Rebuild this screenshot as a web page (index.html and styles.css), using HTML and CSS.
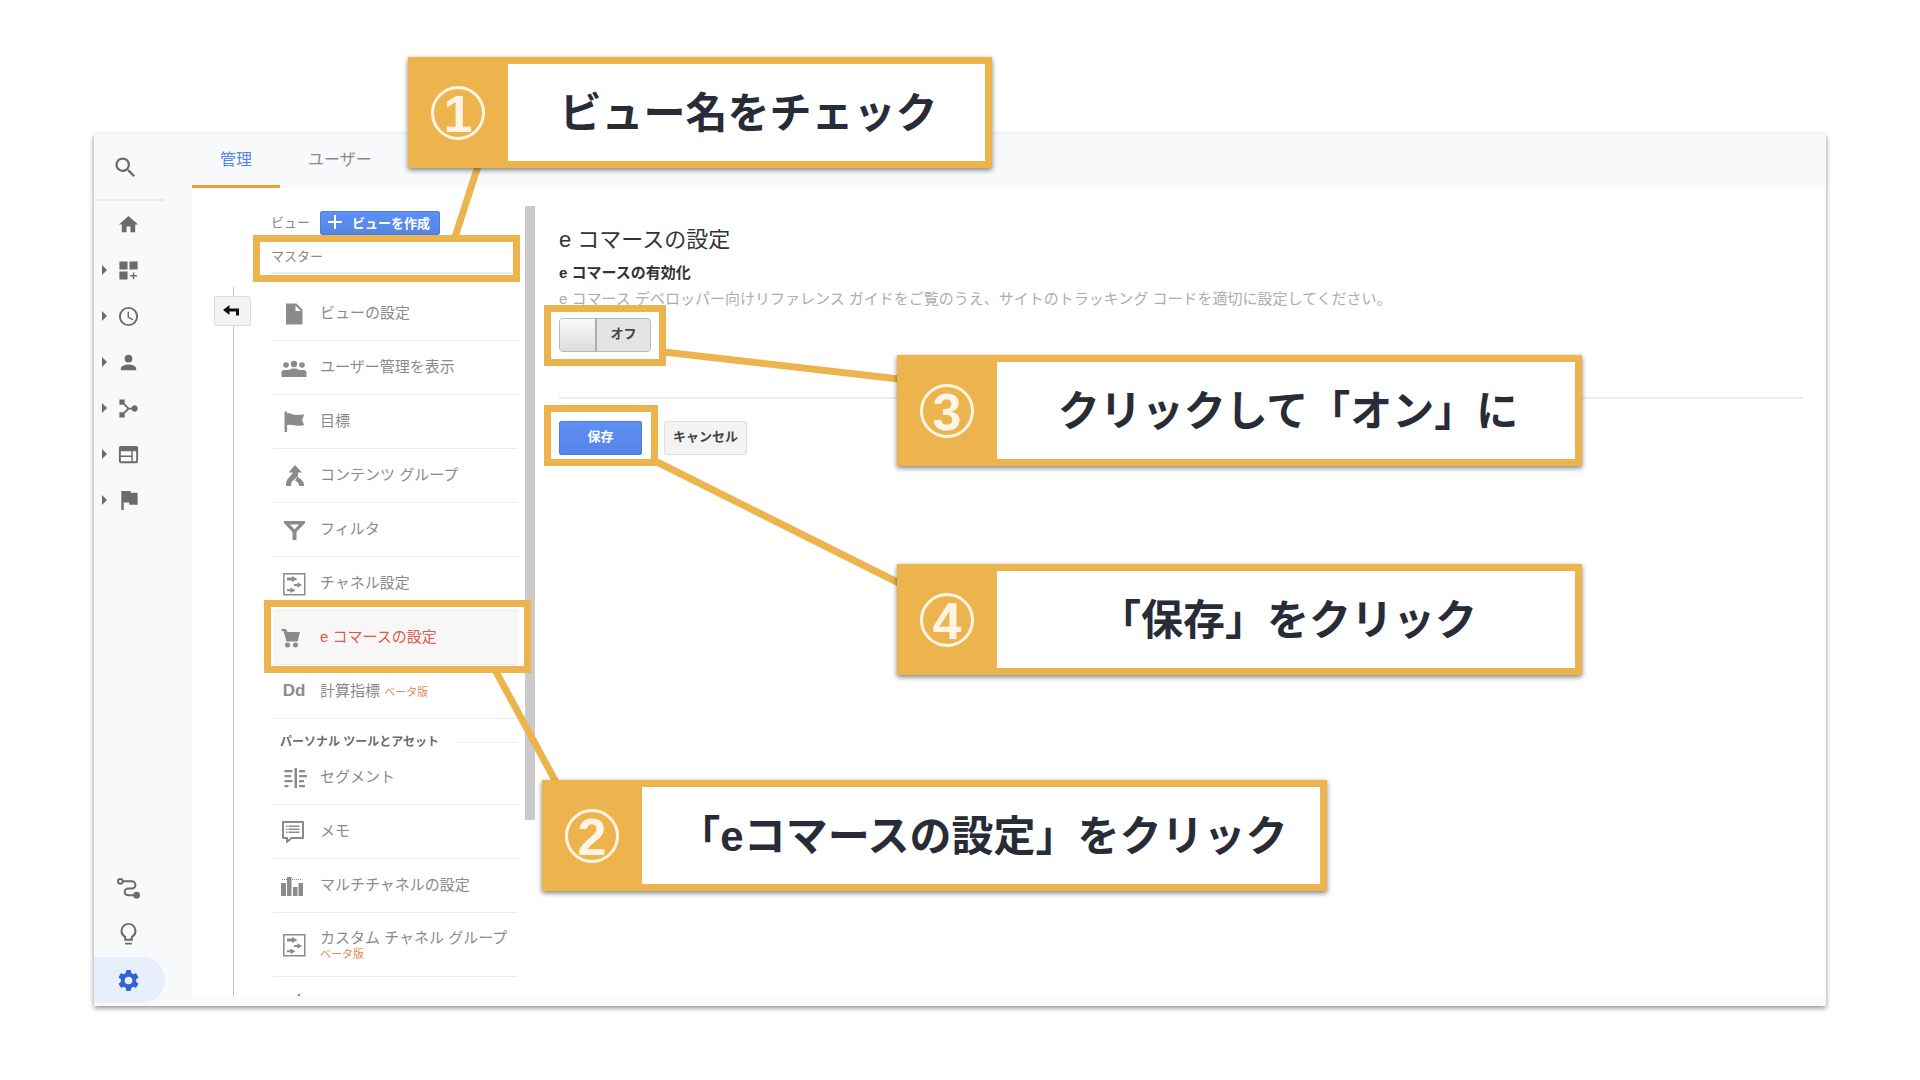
FILE: index.html
```html
<!DOCTYPE html>
<html lang="ja">
<head>
<meta charset="utf-8">
<title>e コマースの設定</title>
<link rel="stylesheet" href="styles.css">
</head>
<body>
<div class="app">
  <nav class="sidebar" aria-label="メイン">
    <button class="search" type="button" aria-label="検索">
      <svg class="icon" viewBox="0 0 24 24"><path d="M15.5 14h-.79l-.28-.27A6.47 6.47 0 0 0 16 9.5 6.5 6.5 0 1 0 9.500 16c1.610 0 3.090-.59 4.230-1.570l.27.28v.79l5 4.990L20.490 19l-4.990-5zm-6 0a4.500 4.500 0 1 1 0-9 4.500 4.500 0 0 1 0 9z"/></svg>
    </button>
    <a class="nav-item" href="#home" aria-label="ホーム">
      <svg class="icon" viewBox="0 0 24 24"><path d="M10 20v-6h4v6h5v-8h3L12 3 2 12h3v8z"/></svg>
    </a>
    <a class="nav-item" href="#custom" aria-label="カスタム">
      <span class="caret"></span>
      <svg class="icon" viewBox="0 0 24 24"><path d="M2.500 2.500h8.500v8.500H2.500zM13 2.500h8.500v8.500H13zM2.500 13h8.500v8.500H2.500zM16.500 14h1.500v2.800h2.800v1.500H18v2.800h-1.500v-2.800h-2.800v-1.500h2.800z"/></svg>
    </a>
    <a class="nav-item" href="#realtime" aria-label="リアルタイム">
      <span class="caret"></span>
      <svg class="icon" viewBox="0 0 24 24"><path d="M12 2a10 10 0 1 0 0 20 10 10 0 0 0 0-20zm0 18a8 8 0 1 1 0-16 8 8 0 0 1 0 16zm.5-13H11v6l5.250 3.150.75-1.230-4.500-2.670z"/></svg>
    </a>
    <a class="nav-item" href="#audience" aria-label="ユーザー">
      <span class="caret"></span>
      <svg class="icon" viewBox="0 0 24 24"><path d="M12 12a4 4 0 1 0 0-8 4 4 0 0 0 0 8zm0 2c-2.670 0-8 1.340-8 4v2h16v-2c0-2.660-5.330-4-8-4z"/></svg>
    </a>
    <a class="nav-item" href="#acquisition" aria-label="集客">
      <span class="caret"></span>
      <svg class="icon" viewBox="0 0 24 24"><path d="M2.500 2.500h5.500v4l4.500 4.600h2.700a3.300 3.300 0 1 1 0 1.900h-2.700L8 17.500v4H2.500V16h4.200l4-4-4-4H2.500z"/></svg>
    </a>
    <a class="nav-item" href="#behavior" aria-label="行動">
      <span class="caret"></span>
      <svg class="icon" viewBox="0 0 24 24"><path d="M20 3H4a2 2 0 0 0-2 2v14c0 1.100.9 2 2 2h16a2 2 0 0 0 2-2V5a2 2 0 0 0-2-2zm-5 16H4v-4.500h11zm0-6H4V8.500h11zm5 6h-3.500V8.500H20z"/></svg>
    </a>
    <a class="nav-item" href="#conversions" aria-label="コンバージョン">
      <span class="caret"></span>
      <svg class="icon" viewBox="0 0 24 24"><path d="M14.400 4 14 2H4.500v20H7v-8h5.600l.4 2.500h8.500V4z"/></svg>
    </a>
    <span class="spacer"></span>
    <a class="nav-item" href="#attribution" aria-label="アトリビューション">
      <svg class="icon" viewBox="0 0 24 24"><g fill="none" stroke="currentColor" stroke-width="2"><circle cx="3.500" cy="4.500" r="2.500"/><path d="M6 4.500h9.500a3.500 3.500 0 0 1 0 7.500h-4a3.500 3.500 0 0 0 0 7H18"/></g><circle cx="20.500" cy="19" r="3.500"/></svg>
    </a>
    <a class="nav-item" href="#discover" aria-label="発見">
      <svg class="icon" viewBox="0 0 24 24"><path d="M8.500 22.500h7v-2h-7zM12 0a8.300 8.300 0 0 0-4.500 15.200V18.500h9v-3.300A8.300 8.300 0 0 0 12 0zm3 13.500-.6.500v2.500H9.600V14L9 13.500a6.200 6.200 0 1 1 6 0z"/></svg>
    </a>
    <a class="nav-item nav-current" href="#admin" aria-label="管理">
      <svg class="icon" viewBox="0 0 24 24"><path d="M19.900 13.200a8 8 0 0 0 0-2.400l2.200-1.800c.2-.2.300-.4.100-.7l-2.100-3.700c-.1-.2-.4-.3-.7-.2l-2.600 1a8 8 0 0 0-2-1.200L14.400 1.500c0-.3-.2-.5-.5-.5h-3.800c-.3 0-.5.2-.5.5l-.4 2.700a8 8 0 0 0-2 1.200l-2.600-1c-.3-.1-.6 0-.7.200L1.800 8.300c-.2.300-.1.500.1.700l2.200 1.800a8 8 0 0 0 0 2.400L1.900 15c-.2.200-.3.400-.1.700l2.100 3.700c.1.200.4.300.7.200l2.600-1a8 8 0 0 0 2 1.200l.4 2.700c0 .3.200.5.500.5h3.800c.3 0 .5-.2.500-.5l.4-2.700a8 8 0 0 0 2-1.200l2.600 1c.3.100.6 0 .7-.2l2.100-3.700c.2-.3.100-.5-.1-.7zM12 16a4 4 0 1 1 0-8 4 4 0 0 1 0 8z"/></svg>
    </a>
  </nav>

  <div class="main">
    <nav class="tabs" aria-label="タブ">
      <a class="tab tab-current" href="#admin">管理</a>
      <a class="tab" href="#user">ユーザー</a>
    </nav>
    <div class="panels">
      <div class="rail">
        <span class="rail-stub"></span>
        <button class="back" type="button" aria-label="戻る">
          <svg viewBox="0 0 18 12"><path d="M0 5 6.500 0v3.500H16V10.500h-3V6.500H6.500V10z"/></svg>
        </button>
        <span class="rail-line"></span>
      </div>

      <section class="view">
        <div class="view-head">
          <span class="view-label">ビュー</span>
          <button class="primary create" type="button">
            <svg viewBox="0 0 14 14"><path d="M6 0h2v6h6v2H8v6H6V8H0V6h6z"/></svg>
            ビューを作成
          </button>
        </div>
        <div class="view-name">マスター</div>
        <ul class="list">
          <li><a class="row" href="#view">
            <svg class="glyph" viewBox="0 0 24 24"><path d="M4 1.500h10.500l6 6v15H4zM13.500 3.500V9H19z"/></svg>
            <span>ビューの設定</span></a></li>
          <li><a class="row" href="#users">
            <svg class="glyph" viewBox="0 0 24 24"><circle cx="4" cy="9" r="2.800"/><circle cx="12" cy="8" r="3.200"/><circle cx="20" cy="9" r="2.800"/><path d="M-.5 21v-4c0-2 1-3 3-3H7c1-1 2.500-1.500 5-1.500s4 .5 5 1.500h4.500c2 0 3 1 3 3v4z"/></svg>
            <span>ユーザー管理を表示</span></a></li>
          <li><a class="row" href="#goals">
            <svg class="glyph" viewBox="0 0 24 24"><path d="M2.500 1.500h2.600v2c3-1 5 1.500 9 1.500 3 0 5-.5 8-.5l-2 5.500 2 5c-3 1-6 1-9 .5-3-.6-5-1-8-.5v7H2.500z"/></svg>
            <span>目標</span></a></li>
          <li><a class="row" href="#content">
            <svg class="glyph" viewBox="0 0 24 24"><path d="m13 1 7 7.500h-4v3.500L10.500 17c-1 1-1.500 2-1.500 5H4c0-4 .5-6 2.500-8l4-4.500v-1H6.500zM15.500 12.500l3.500 3c2.500 2 3 3.500 3 6.500h-5c0-2.500-1-3.500-4-5.500z"/></svg>
            <span>コンテンツ グループ</span></a></li>
          <li><a class="row" href="#filter">
            <svg class="glyph" viewBox="0 0 24 24"><path fill-rule="evenodd" d="M2 3h21v2l-8.500 9v8h-4v-8L2 5zm6 3.500 4.500 5 4.500-5z"/></svg>
            <span>フィルタ</span></a></li>
          <li><a class="row" href="#channel">
            <svg class="glyph" viewBox="0 0 24 24"><path fill="none" stroke="currentColor" stroke-width="1.500" d="M1.800 1.800h21v21h-21z"/><path d="M5 5.500h5V4l5.500 3L10 10V8.500H5zM12 12h3.500v-1.700l4.500 2.700-4.500 2.700V14H12zM5 17.200h3.500v-1.700l5 2.700-5 2.700v-1.700H5z"/></svg>
            <span>チャネル設定</span></a></li>
          <li><a class="row row-current" href="#ecommerce" aria-current="page">
            <svg class="glyph" viewBox="0 0 24 24"><path d="M-.5 3h4.500l1.500 3H18l-2.500 9.500H4.500L1.500 5h-2z"/><circle cx="5.500" cy="19" r="2.500"/><circle cx="13.500" cy="19" r="2.500"/></svg>
            <span>e コマースの設定</span></a></li>
          <li><a class="row" href="#metrics">
            <b class="glyph glyph-text">Dd</b>
            <span>計算指標 <small>ベータ版</small></span></a></li>
        </ul>
        <h2 class="group">パーソナル ツールとアセット</h2>
        <ul class="list">
          <li><a class="row" href="#segment">
            <svg class="glyph" viewBox="0 0 24 24"><path d="M12.500 2H15v20h-2.500zM2.500 4h8v2.300h-8zM2.500 9h6.500v2.300H2.500zM2.500 14h8v2.300h-8zM2.500 19h4v2.300h-4zM17 4h6v2.300h-6zM17 9h8v2.300h-8zM17 14h5v2.300h-5zM17 19h6v2.300h-6z"/></svg>
            <span>セグメント</span></a></li>
          <li><a class="row" href="#memo">
            <svg class="glyph" viewBox="0 0 24 24"><path fill="none" stroke="currentColor" stroke-width="2" d="M1 2h20v16H9.500L5 22v-4H1z" stroke-linejoin="round"/><path d="M4 5.500h1.500V7H4zM6.500 5.500h11V7h-11zM4 8.500h1.500V10H4zM6.500 8.500h11V10h-11zM4 11.500h1.500V13H4zM6.500 11.500h11V13h-11z"/></svg>
            <span>メモ</span></a></li>
          <li><a class="row" href="#multi">
            <svg class="glyph" viewBox="0 0 24 24"><path d="M-1 9h5v13h-5zM5 3h4.500v19H5zM11 13h4.500v9H11zM16.500 9H21v13h-4.500z"/><path fill="none" stroke="currentColor" stroke-dasharray="1 1" d="M0 5.500h20"/></svg>
            <span>マルチチャネルの設定</span></a></li>
          <li><a class="row row-tall" href="#custom-channel">
            <svg class="glyph" viewBox="0 0 24 24"><path fill="none" stroke="currentColor" stroke-width="1.500" d="M1.800 1.800h21v21h-21z"/><path d="M5 5.500h5V4l5.500 3L10 10V8.500H5zM12 12h3.500v-1.700l4.500 2.700-4.500 2.700V14H12zM5 17.200h3.500v-1.700l5 2.700-5 2.700v-1.700H5z"/></svg>
            <span class="stack">カスタム チャネル グループ<small>ベータ版</small></span></a></li>
          <li><a class="row" href="#alerts" aria-label="カスタム アラート">
            <svg class="glyph" viewBox="0 0 24 24"><path d="M18 1v20l-8-6H3V8h7z"/></svg></a></li>
        </ul>
      </section>

      <div class="scrollbar"></div>

      <main class="content">
        <h1>e コマースの設定</h1>
        <h3>e コマースの有効化</h3>
        <p>e コマース デベロッパー向けリファレンス ガイドをご覧のうえ、サイトのトラッキング コードを適切に設定してください。</p>
        <label class="toggle">
          <input type="checkbox">
          <span class="knob"></span>
          <span class="state">オフ</span>
        </label>
        <hr>
        <div class="actions">
          <button class="primary" type="button">保存</button>
          <button class="secondary" type="button">キャンセル</button>
        </div>
      </main>
    </div>
  </div>
</div>

<div class="notes">
  <svg class="links" viewBox="0 0 1920 1080"><path d="M478 166 455 237M494 668 557 784M664 352 899 379M655 461 899 583"/></svg>
  <span class="mark mark-1"></span>
  <span class="mark mark-2"></span>
  <span class="mark mark-3"></span>
  <span class="mark mark-4"></span>
  <div class="note note-1"><span class="num"><b>1</b></span><span class="text">ビュー名をチェック</span></div>
  <div class="note note-2"><span class="num"><b>2</b></span><span class="text">「eコマースの設定」をクリック</span></div>
  <div class="note note-3"><span class="num"><b>3</b></span><span class="text">クリックして「オン」に</span></div>
  <div class="note note-4"><span class="num"><b>4</b></span><span class="text">「保存」をクリック</span></div>
</div>
</body>
</html>
```
FILE: styles.css
```css
* { box-sizing: border-box; }

body {
  margin: 0;
  padding: 134px 94px 74px;
  position: relative;
  background: #fff;
  color: #8a8a8a;
  font-family: "Liberation Sans", "Noto Sans CJK JP", sans-serif;
  font-size: 15px;
}

a { color: inherit; text-decoration: none; }
button { font: inherit; cursor: pointer; }
svg { fill: currentColor; }
ul { list-style: none; margin: 0; padding: 0; }

.app {
  display: flex;
  height: calc(100vh - 208px);
  min-height: 640px;
  background: #f8f9fb;
  box-shadow: 0 2px 5px rgba(0, 0, 0, 0.45);
}

/* Sidebar */
.sidebar {
  display: flex;
  flex-direction: column;
  flex: none;
  width: 71px;
  margin-right: 27px;
  padding-bottom: 3px;
  color: #6b6b6b;
}
.search {
  height: 67px;
  padding: 2px 28px 0 18px;
  border: 0;
  border-bottom: 2px solid #e9ebeb;
  background: none;
  color: inherit;
  display: flex;
  align-items: center;
}
.icon { width: 23px; height: 23px; flex: none; }
.search .icon { width: 27px; height: 27px; }
.nav-item {
  display: flex;
  align-items: center;
  justify-content: flex-end;
  gap: 10px;
  height: 46px;
  padding-right: 25px;
}
.caret {
  border: 5px solid transparent;
  border-left-color: currentColor;
  border-right-width: 0;
}
.spacer { flex: 1; }
.nav-current {
  background: #e7effd;
  border-radius: 0 23px 23px 0;
  color: #2f63cf;
}

/* Tabs */
.main {
  flex: 1;
  min-width: 0;
  display: flex;
  flex-direction: column;
  padding: 0 1px 10px 0;
}
.tabs { display: flex; flex: none; height: 54px; font-size: 16px; }
.tab {
  padding: 0 28px;
  line-height: 52px;
  border-bottom: 3px solid transparent;
}
.tab-current { color: #5585e8; border-color: #f29b38; }

.panels { flex: 1; min-height: 0; display: flex; background: #fff; overflow: hidden; }

.rail {
  flex: none;
  width: 79px;
  padding-top: 99px;
  display: flex;
  flex-direction: column;
}
.rail-stub, .rail-line { width: 1px; margin-left: 41px; background: #c4c4c4; }
.rail-stub { height: 9px; }
.rail-line { flex: 1; }
.back {
  width: 37px;
  height: 30px;
  margin-left: 22px;
  padding: 0 2px 0 0;
  border: 1px solid #dcdcdc;
  border-radius: 2px;
  background: #f3f3f3;
  color: #111;
}
.back svg { width: 18px; height: 12px; display: block; margin: 0 auto; }

/* View column */
.view { flex: none; width: 247px; padding-top: 23px; }
.view-head { display: flex; align-items: center; height: 24px; font-size: 13px; }
.view-label { width: 49px; padding-bottom: 3px; }
.primary {
  border: 1px solid #4a7de8;
  border-radius: 2px;
  background: linear-gradient(#5d8ff5, #5585e5);
  color: #fff;
  font-weight: bold;
}
.create {
  display: flex;
  align-items: center;
  gap: 10px;
  height: 24px;
  width: 120px;
  padding: 0 7px 2px;
  font-size: 13px;
  white-space: nowrap;
}
.create svg { width: 14px; height: 14px; flex: none; }
.view-name {
  height: 39px;
  padding-top: 5px;
  line-height: 34px;
  font-size: 13px;
  border-bottom: 2px solid #ececec;
}
.view-name + .list { margin-top: 13px; }
.list { margin-left: 2px; }
.row {
  display: flex;
  align-items: center;
  gap: 14px;
  height: 54px;
  padding-left: 9px;
  border-bottom: 1px solid #ececec;
  white-space: nowrap;
}
.row > span { padding-bottom: 4px; }
.row-current { background: #f7f7f7; color: #dc5b4c; }
.row-current .glyph { color: #8b8b8b; }
.row-tall { height: 64px; }
.row-tall > .stack { padding-bottom: 0; }
.glyph { width: 24px; height: 24px; flex: none; color: #8b8b8b; overflow: visible; }
.glyph-text { font-size: 17px; line-height: 22px; text-align: center; }
.row small { font-size: 11px; color: #e08a55; }
.stack { display: flex; flex-direction: column; line-height: 19px; }
.stack small { line-height: 15px; }
.group {
  display: flex;
  align-items: center;
  gap: 18px;
  margin: 0 0 0 9px;
  padding-top: 14px;
  font-size: 12px;
  line-height: 18px;
  color: #6b6b6b;
}
.group::after { content: ""; flex: 1; height: 1px; background: #ececec; }

.scrollbar {
  flex: none;
  width: 10px;
  height: 76%;
  margin: 18px 0 0 7px;
  background: #cacaca;
}

/* Settings form */
.content { flex: 1; min-width: 0; padding: 36px 22px 0 24px; }
.content h1 { margin: 0; font-size: 22px; font-weight: normal; line-height: 32px; color: #333; }
.content h3 { margin: 4px 0 0; font-size: 15px; line-height: 26px; color: #333; }
.content p { margin: 0; font-size: 15px; line-height: 26px; color: #adadad; }
.toggle {
  position: relative;
  display: flex;
  width: 92px;
  height: 34px;
  margin-top: 6px;
  border: 1px solid #b5b9be;
  border-radius: 4px;
  background: #e4e4e4;
  overflow: hidden;
  cursor: pointer;
}
.toggle input { position: absolute; opacity: 0; margin: 0; }
.knob { width: 37px; border-right: 2px solid #aeaeae; background: linear-gradient(#fafafa, #dcdcdc); }
.state { flex: 1; text-align: center; line-height: 30px; font-size: 13px; font-weight: bold; color: #444; }
.content hr { margin: 45px 0 22px; border: 0; border-top: 2px solid #ececec; }
.actions { display: flex; gap: 22px; }
.actions button { width: 83px; height: 34px; padding: 0 0 2px; font-size: 13px; font-weight: bold; line-height: 28px; }
.actions .secondary { border: 1px solid #dedede; border-radius: 2px; background: #f3f3f3; color: #444; }

/* Annotations laid over the screen */
.notes { position: absolute; top: 0; left: 0; color: #272c36; pointer-events: none; }
.links { position: absolute; top: 0; left: 0; width: 1920px; height: 1080px; fill: none; stroke: #edb44e; stroke-width: 7; }
.mark { position: absolute; border: 7px solid #edb44e; }
.mark-1 { left: 253px; top: 235px; width: 267px; height: 47px; }
.mark-2 { left: 264px; top: 600px; width: 267px; height: 73px; }
.mark-3 { left: 544px; top: 305px; width: 122px; height: 61px; }
.mark-4 { left: 544px; top: 405px; width: 114px; height: 61px; }
.note {
  position: absolute;
  display: flex;
  height: 111px;
  border: 7px solid #edb44e;
  border-left: 0;
  background: #fff;
  box-shadow: 0 2px 5px rgba(0, 0, 0, 0.5);
  white-space: nowrap;
  font-weight: bold;
}
.note-1 { left: 408px; top: 57px; width: 584px; }
.note-2 { left: 542px; top: 780px; width: 785px; }
.note-3 { left: 897px; top: 355px; width: 685px; }
.note-4 { left: 897px; top: 564px; width: 685px; }
.num {
  flex: none;
  display: flex;
  align-items: center;
  justify-content: center;
  width: 100px;
  background: #edb44e;
  color: #fff5e4;
}
.num b {
  width: 54px;
  height: 54px;
  border: 3px solid currentColor;
  border-radius: 50%;
  font-size: 52px;
  line-height: 50px;
  text-align: center;
}
.text { flex: 1; padding: 1px 0 0 4px; font-size: 42px; line-height: 97px; text-align: center; }
```
